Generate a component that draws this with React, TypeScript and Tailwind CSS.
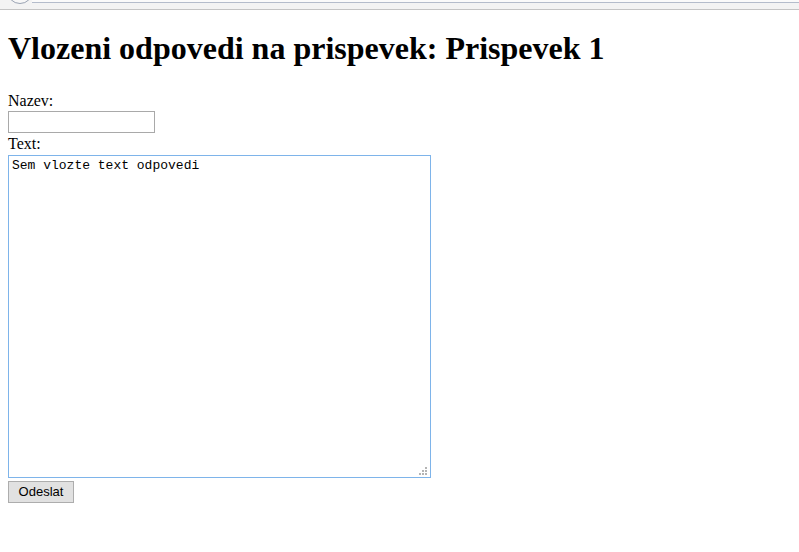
import React from "react";

export default function App() {
  return (
    <div className="min-h-[552px] w-full bg-white text-black" style={{ fontFamily: '"Liberation Serif", "Times New Roman", serif' }}>
      <div className="relative h-[10px] overflow-hidden border-b border-[#c4c4c4] bg-[#f3f3f3]">
        <div className="absolute left-[7px] top-[-22px] h-[26px] w-[26px] rounded-full border border-[#9aa3b3] bg-[#f7f7f7]" />
        <div className="absolute left-[32px] right-0 top-0 h-[3px] border-b border-[#b4bccb] bg-[#fafafa]" />
      </div>
      <div className="px-[8px]">
        <h1 className="mt-[20px] mb-[25px] text-[32px] font-bold leading-[37px]">
          Vlozeni odpovedi na prispevek: Prispevek 1
        </h1>
        <form className="flex flex-col items-start" onSubmit={(e) => e.preventDefault()}>
          <label className="text-[16px] leading-[18px]">Nazev:</label>
          <input
            type="text"
            className="mt-[1px] h-[22px] w-[147px] border border-[#a9a9a9] bg-white px-[2px] text-[13px] outline-none"
          />
          <label className="mt-[2px] text-[16px] leading-[18px]">Text:</label>
          <div className="relative mt-[2px] h-[323px] w-[423px]">
            <textarea
              defaultValue="Sem vlozte text odpovedi"
              className="block h-full w-full resize-none border border-[#7eb4ea] bg-white px-[3px] py-[2px] text-[13px] leading-[15px] text-black outline-none"
              style={{ fontFamily: '"Liberation Mono", "Courier New", monospace' }}
            />
            <div className="pointer-events-none absolute bottom-[3px] right-[4px] grid grid-cols-3 grid-rows-3 gap-[1px]">
              <span className="h-[2px] w-[2px]" />
              <span className="h-[2px] w-[2px]" />
              <span className="h-[2px] w-[2px] bg-[#b4b4b4]" />
              <span className="h-[2px] w-[2px]" />
              <span className="h-[2px] w-[2px] bg-[#b4b4b4]" />
              <span className="h-[2px] w-[2px] bg-[#b4b4b4]" />
              <span className="h-[2px] w-[2px] bg-[#b4b4b4]" />
              <span className="h-[2px] w-[2px] bg-[#b4b4b4]" />
              <span className="h-[2px] w-[2px] bg-[#b4b4b4]" />
            </div>
          </div>
          <button
            type="submit"
            className="mt-[3px] h-[22px] w-[66px] border border-[#adadad] bg-[#e1e1e1] text-[13px] leading-[20px] text-black"
            style={{ fontFamily: '"Liberation Sans", Arial, sans-serif' }}
          >
            Odeslat
          </button>
        </form>
      </div>
    </div>
  );
}
